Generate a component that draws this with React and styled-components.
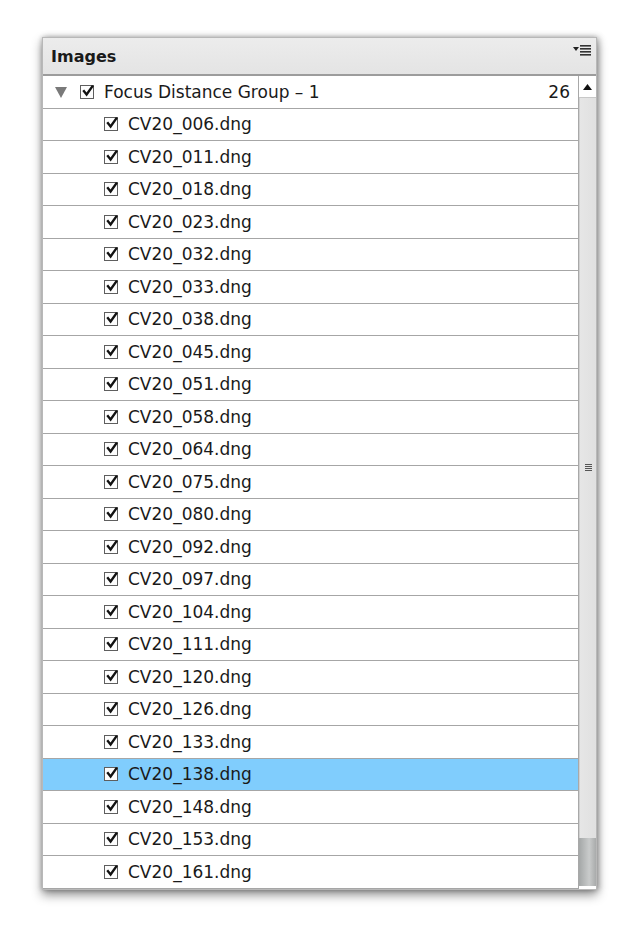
import styled, { createGlobalStyle } from 'styled-components';

const files = [
	'006', '011', '018', '023', '032', '033', '038', '045', '051', '058', '064', '075',
	'080', '092', '097', '104', '111', '120', '126', '133', '138', '148', '153', '161',
];

const selected = '138';

const GlobalStyle = createGlobalStyle`
	body {
		margin: 0;
		background: #ffffff;
		font-family: "DejaVu Sans", "Liberation Sans", sans-serif;
	}
`;

const Check = () => (
	<CheckBox>
		<svg width="14" height="14" viewBox="0 0 14 14">
			<path d="M3 7.2 L5.6 10.4 L11.2 2.6" fill="none" stroke="#111" strokeWidth="2.4" strokeLinecap="square" />
		</svg>
	</CheckBox>
);

const App = () => {
	return (
		<Page>
			<GlobalStyle />
			<Panel>
				<Header>
					<Title>Images</Title>
					<MenuIcon>
						<svg width="20" height="12" viewBox="0 0 20 12">
							<path d="M1 3 L7 3 L4 7 Z" fill="#222" />
							<rect x="8" y="1" width="11" height="1.6" fill="#333" />
							<rect x="8" y="4" width="11" height="1.6" fill="#333" />
							<rect x="8" y="7" width="11" height="1.6" fill="#333" />
							<rect x="8" y="10" width="11" height="1.6" fill="#333" />
						</svg>
					</MenuIcon>
				</Header>
				<Body>
					<List>
						<GroupRow>
							<Disclosure />
							<Check />
							<Label>Focus Distance Group – 1</Label>
							<Count>26</Count>
						</GroupRow>
						{files.map((f) => (
							<FileRow key={f} $active={f === selected}>
								<Check />
								<Label>CV20_{f}.dng</Label>
							</FileRow>
						))}
					</List>
					<Scrollbar>
						<ArrowButton>
							<svg width="9" height="6" viewBox="0 0 9 6">
								<path d="M0 6 L4.5 0 L9 6 Z" fill="#111" />
							</svg>
						</ArrowButton>
						<Thumb>
							<Grip />
						</Thumb>
						<Track />
						<TrackEnd />
					</Scrollbar>
				</Body>
			</Panel>
		</Page>
	);
};

const Page = styled.div`
	padding: 37px 0 0 42px;
	height: 939px;
	box-sizing: border-box;
`;

const Panel = styled.div`
	width: 555px;
	background: #ffffff;
	border: 1px solid #b8b8b8;
	box-sizing: border-box;
	box-shadow: 0 5px 10px rgba(0, 0, 0, 0.42), 2px 0 6px rgba(0, 0, 0, 0.25), -1px 0 4px rgba(0, 0, 0, 0.12);
`;

const Header = styled.div`
	display: flex;
	align-items: center;
	justify-content: space-between;
	height: 36px;
	padding: 0 4px 0 8px;
	background: linear-gradient(#ececec, #e4e4e4);
	border-bottom: 2px solid #9c9c9c;
`;

const Title = styled.span`
	font-size: 16px;
	font-weight: bold;
	color: #1a1a1a;
	margin-top: 1px;
`;

const MenuIcon = styled.span`
	display: flex;
	align-self: flex-start;
	margin-top: 6px;
`;

const Body = styled.div`
	display: flex;
`;

const List = styled.div`
	flex: 1;
	border-right: 1px solid #a8a8a8;
`;

const Row = styled.div`
	display: flex;
	align-items: center;
	height: 31.5px;
	border-bottom: 1px solid #a6a6a6;
	font-size: 17px;
	color: #1a1a1a;
`;

const GroupRow = styled(Row)`
	padding: 0 8px 0 12px;
`;

const FileRow = styled(Row)`
	padding-left: 61px;
	background: ${(props) => (props.$active ? '#80cdfd' : '#ffffff')};
`;

const Disclosure = styled.span`
	width: 0;
	height: 0;
	border-left: 6px solid transparent;
	border-right: 6px solid transparent;
	border-top: 11px solid #7a7a7a;
	margin-right: 13px;
	margin-top: 2px;
`;

const CheckBox = styled.span`
	position: relative;
	width: 12px;
	height: 12px;
	border: 1px solid #5e5e5e;
	background: #fdfdfd;
	margin-right: 10px;
	flex-shrink: 0;

	svg {
		position: absolute;
		left: 0;
		top: -2px;
	}
`;

const Label = styled.span`
	white-space: nowrap;
`;

const Count = styled.span`
	margin-left: auto;
`;

const Scrollbar = styled.div`
	width: 17px;
	display: flex;
	flex-direction: column;
	background: #ffffff;
`;

const ArrowButton = styled.div`
	height: 21px;
	display: flex;
	align-items: center;
	justify-content: center;
	border-bottom: 1px solid #c8c8c8;
`;

const Thumb = styled.div`
	flex: 1;
	display: flex;
	align-items: center;
	justify-content: center;
	background: linear-gradient(90deg, #e6e6e6, #e0e0e0);
	border-left: 1px solid #d0d0d0;
`;

const Grip = styled.span`
	width: 7px;
	height: 7px;
	background: repeating-linear-gradient(#555 0 1px, transparent 1px 2px);
`;

const Track = styled.div`
	height: 48px;
	background: linear-gradient(90deg, #a4a7a7, #c9cbcb 60%, #a9abab);
`;

const TrackEnd = styled.div`
	height: 3px;
	background: #ffffff;
`;

export default App;
